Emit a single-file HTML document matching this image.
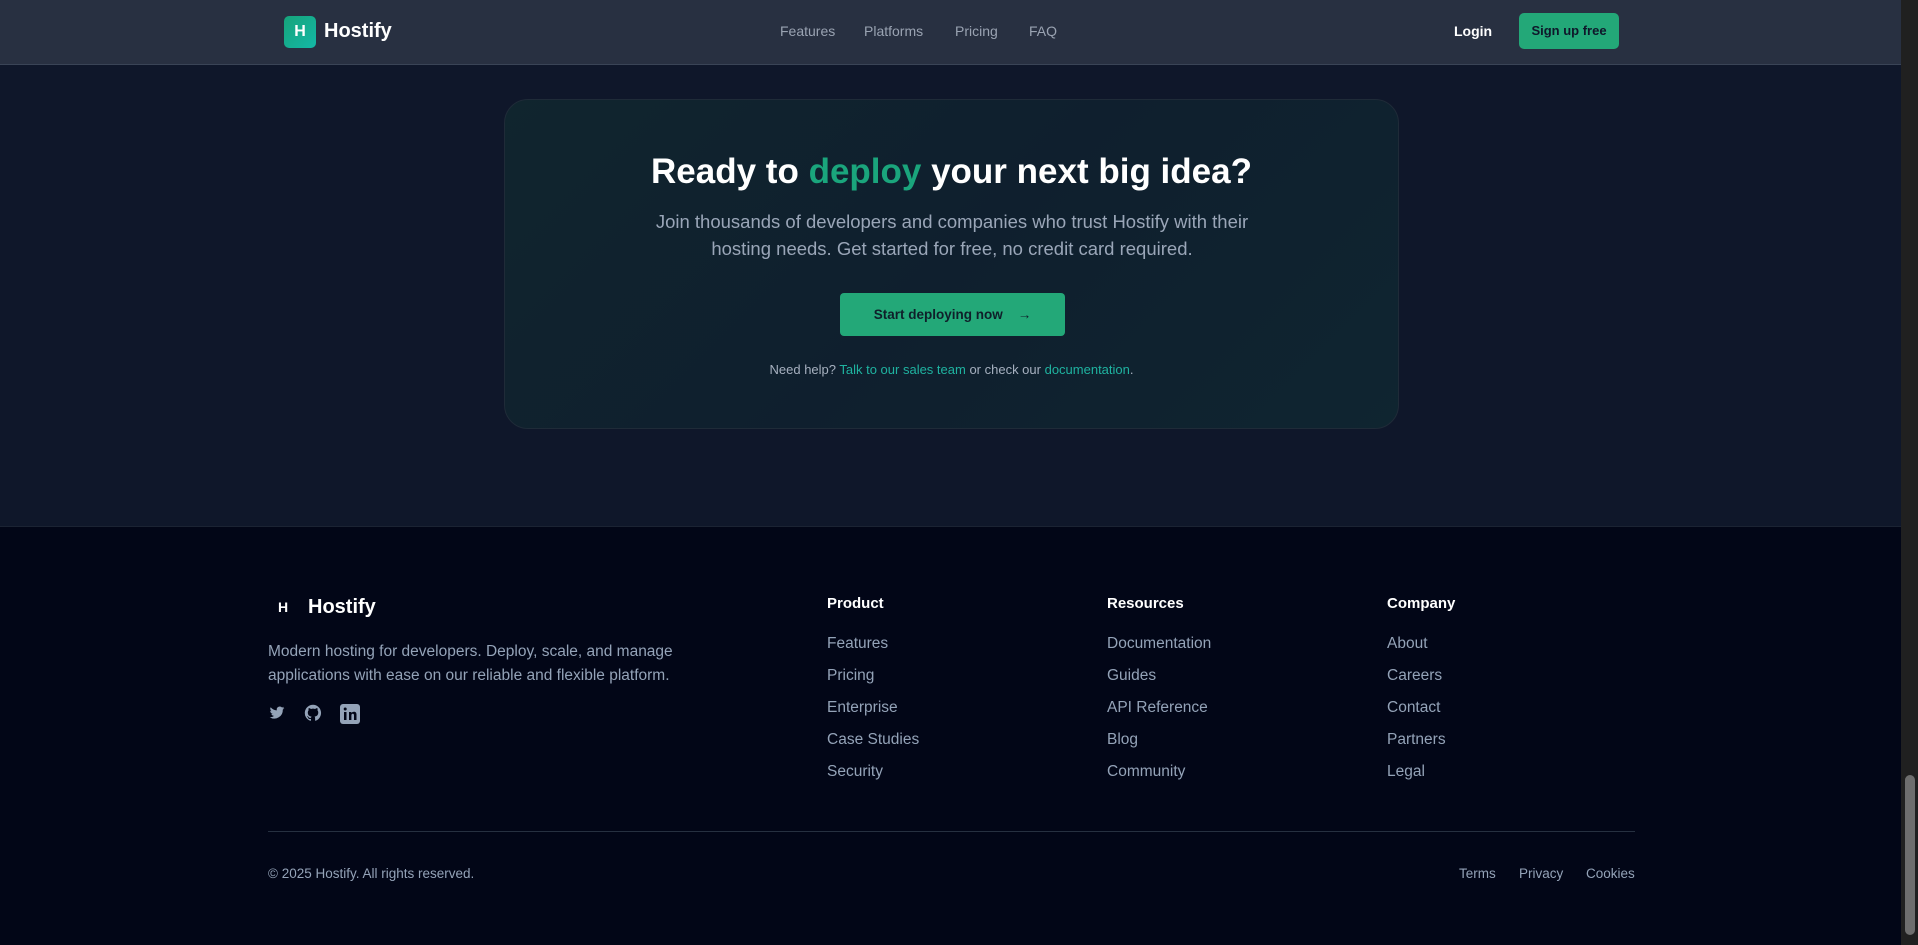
<!DOCTYPE html>
<html><head><meta charset="utf-8"><style>
*{box-sizing:border-box;margin:0;padding:0}
html,body{width:1918px;height:945px;overflow:hidden}
body{font-family:"Liberation Sans",sans-serif;background:#0f172a;position:relative}
.nav{position:absolute;left:0;top:0;width:1901px;height:65px;background:#283041;border-bottom:1px solid #3a4456}
.logo{position:absolute;left:284px;top:16px;width:32px;height:32px;border-radius:5px;background:linear-gradient(135deg,#16a37a,#14b8a6);color:#fff;font-weight:bold;font-size:16px;text-align:center;line-height:32px}
.brand{position:absolute;left:324px;top:20px;color:#fff;font-weight:bold;font-size:20px}
.links{position:absolute;top:23px;font-size:14px;color:#9aa3b2}
.links span{position:absolute;white-space:nowrap}
.login{position:absolute;left:1454px;top:23px;color:#fff;font-weight:bold;font-size:14px}
.signup{position:absolute;left:1519px;top:13px;width:100px;height:36px;background:#23a878;border-radius:5px;color:#0f172a;font-size:13px;font-weight:bold;text-align:center;line-height:36px}
.card{position:absolute;left:504px;top:99px;width:895px;height:330px;border:1px solid #1f2b38;border-radius:24px;background:linear-gradient(135deg,#10252e,#0f1f2e 50%,#0f2530)}
.card h1{position:absolute;top:52px;width:100%;text-align:center;color:#fff;font-size:35px;font-weight:bold}
.g{color:#1aa57c}
.card p.sub{position:absolute;top:108px;left:122px;width:650px;text-align:center;color:#9aa6b8;font-size:18.5px;line-height:27px}
.btn{position:absolute;left:335px;top:193px;width:225px;height:43px;background:#23a878;border-radius:4px;color:#0f1f2a;font-size:13.5px;font-weight:bold;text-align:center;line-height:43px}
.help{position:absolute;top:262px;width:100%;text-align:center;color:#a6b0bf;font-size:13px}
.help a{color:#1fb3a0;text-decoration:none}
.footer{position:absolute;left:0;top:526px;width:1901px;height:419px;background:#020617;border-top:1px solid #1b2333}
.fl{position:absolute;color:#fff;font-weight:bold}
.desc{position:absolute;left:268px;top:113px;width:460px;color:#94a3b8;font-size:15.5px;line-height:24px}
.col{position:absolute;top:68px}
.col h4{color:#fff;font-size:15px;font-weight:bold;margin-bottom:23px}
.col div{color:#94a3b8;font-size:15.5px;height:32px}
.hr{position:absolute;left:268px;top:304px;width:1367px;height:1px;background:#263040}
.copy{position:absolute;left:268px;top:339px;color:#94a3b8;font-size:13.5px}
.bl{position:absolute;top:339px;color:#94a3b8;font-size:13.5px}
.sb{position:absolute;right:0;top:0;width:17px;height:945px;background:#202020}
.th{position:absolute;right:3px;top:775px;width:10px;height:160px;background:#6e6e6e;border-radius:5px}
</style></head><body>
<div class="nav">
<div class="logo">H</div><div class="brand">Hostify</div>
<div class="links"><span style="left:780px">Features</span><span style="left:864px">Platforms</span><span style="left:955px">Pricing</span><span style="left:1029px">FAQ</span></div>
<div class="login">Login</div>
<div class="signup">Sign up free</div>
</div>
<div class="card">
<h1>Ready to <span class="g">deploy</span> your next big idea?</h1>
<p class="sub">Join thousands of developers and companies who trust Hostify with their<br>hosting needs. Get started for free, no credit card required.</p>
<div class="btn">Start deploying now &nbsp;&nbsp; →</div>
<div class="help">Need help? <a>Talk to our sales team</a> or check our <a>documentation</a>.</div>
</div>
<div class="footer">
<div class="fl" style="left:278px;top:72px;font-size:14px">H</div>
<div class="fl" style="left:308px;top:69px;font-size:20px">Hostify</div>
<div class="desc">Modern hosting for developers. Deploy, scale, and manage applications with ease on our reliable and flexible platform.</div>
<svg style="position:absolute;left:268px;top:178px" width="18" height="16" viewBox="0 0 24 24" fill="#94a3b8"><path d="M23 4.5a9 9 0 0 1-2.6.7 4.5 4.5 0 0 0 2-2.5 9 9 0 0 1-2.9 1.1A4.5 4.5 0 0 0 11.8 8 12.8 12.8 0 0 1 2.5 3.3a4.5 4.5 0 0 0 1.4 6 4.5 4.5 0 0 1-2-.6 4.5 4.5 0 0 0 3.6 4.5 4.5 4.5 0 0 1-2 .1 4.5 4.5 0 0 0 4.2 3.1A9 9 0 0 1 1 18.3a12.8 12.8 0 0 0 19.7-11.4A9 9 0 0 0 23 4.5z"/></svg>
<svg style="position:absolute;left:304px;top:177px" width="18" height="18" viewBox="0 0 24 24" fill="#94a3b8"><path d="M12 1a11 11 0 0 0-3.5 21.4c.6.1.8-.2.8-.5v-2c-3.1.7-3.7-1.3-3.7-1.3-.5-1.3-1.2-1.6-1.2-1.6-1-.7.1-.7.1-.7 1.1.1 1.7 1.1 1.7 1.1 1 1.7 2.6 1.2 3.2.9.1-.7.4-1.2.7-1.5-2.5-.3-5-1.2-5-5.4 0-1.2.4-2.2 1.1-3-.1-.3-.5-1.4.1-2.9 0 0 .9-.3 3 1.1a10.5 10.5 0 0 1 5.5 0c2.1-1.4 3-1.1 3-1.1.6 1.5.2 2.6.1 2.9.7.8 1.1 1.8 1.1 3 0 4.2-2.6 5.1-5 5.4.4.3.8 1 .8 2v3c0 .3.2.6.8.5A11 11 0 0 0 12 1z"/></svg>
<svg style="position:absolute;left:340px;top:177px" width="20" height="20" viewBox="0 0 20 20"><rect width="20" height="20" rx="3" fill="#94a3b8"/><rect x="4" y="8" width="2.5" height="8" fill="#020617"/><circle cx="5.2" cy="5" r="1.5" fill="#020617"/><path d="M9 8h2.4v1.2c.5-.9 1.5-1.4 2.6-1.4 2 0 2.5 1.3 2.5 3V16H14v-4.5c0-1-.3-1.7-1.2-1.7-1 0-1.4.7-1.4 1.7V16H9z" fill="#020617"/></svg>
<div class="col" style="left:827px"><h4>Product</h4><div>Features</div><div>Pricing</div><div>Enterprise</div><div>Case Studies</div><div>Security</div></div>
<div class="col" style="left:1107px"><h4>Resources</h4><div>Documentation</div><div>Guides</div><div>API Reference</div><div>Blog</div><div>Community</div></div>
<div class="col" style="left:1387px"><h4>Company</h4><div>About</div><div>Careers</div><div>Contact</div><div>Partners</div><div>Legal</div></div>
<div class="hr"></div>
<div class="copy">© 2025 Hostify. All rights reserved.</div>
<div class="bl" style="left:1459px">Terms</div><div class="bl" style="left:1519px">Privacy</div><div class="bl" style="left:1586px">Cookies</div>
</div>
<div class="sb"><div class="th"></div></div>
</body></html>
